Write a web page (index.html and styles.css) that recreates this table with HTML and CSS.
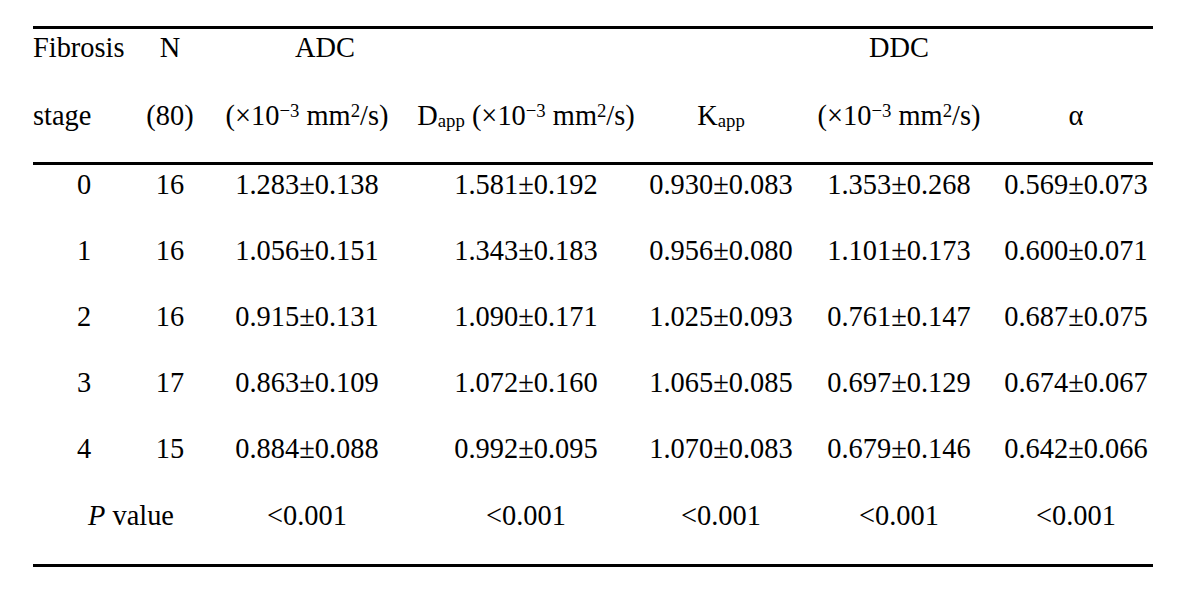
FILE: index.html
```html
<!DOCTYPE html>
<html>
<head>
<meta charset="utf-8">
<link rel="stylesheet" href="styles.css">
</head>
<body>
<table class="tbl">
  <colgroup>
    <col class="c1"><col class="c2"><col class="c3"><col class="c4"><col class="c5"><col class="c6"><col class="c7">
  </colgroup>
  <thead>
    <tr class="h1">
      <th class="left">Fibrosis</th>
      <th>N</th>
      <th class="adc">ADC</th>
      <th></th>
      <th></th>
      <th>DDC</th>
      <th></th>
    </tr>
    <tr class="h2">
      <th class="left">stage</th>
      <th>(80)</th>
      <th>(×10<sup>−3</sup> mm<sup>2</sup>/s)</th>
      <th>D<sub>app</sub> (×10<sup>−3</sup> mm<sup>2</sup>/s)</th>
      <th>K<sub>app</sub></th>
      <th>(×10<sup>−3</sup> mm<sup>2</sup>/s)</th>
      <th>α</th>
    </tr>
  </thead>
  <tbody>
    <tr><td>0</td><td>16</td><td>1.283±0.138</td><td>1.581±0.192</td><td>0.930±0.083</td><td>1.353±0.268</td><td>0.569±0.073</td></tr>
    <tr><td>1</td><td>16</td><td>1.056±0.151</td><td>1.343±0.183</td><td>0.956±0.080</td><td>1.101±0.173</td><td>0.600±0.071</td></tr>
    <tr><td>2</td><td>16</td><td>0.915±0.131</td><td>1.090±0.171</td><td>1.025±0.093</td><td>0.761±0.147</td><td>0.687±0.075</td></tr>
    <tr><td>3</td><td>17</td><td>0.863±0.109</td><td>1.072±0.160</td><td>1.065±0.085</td><td>0.697±0.129</td><td>0.674±0.067</td></tr>
    <tr><td>4</td><td>15</td><td>0.884±0.088</td><td>0.992±0.095</td><td>1.070±0.083</td><td>0.679±0.146</td><td>0.642±0.066</td></tr>
    <tr class="last"><td colspan="2" class="pval"><i>P</i> value</td><td>&lt;0.001</td><td>&lt;0.001</td><td>&lt;0.001</td><td>&lt;0.001</td><td>&lt;0.001</td></tr>
  </tbody>
</table>
</body>
</html>
```

FILE: styles.css
```css
html, body {
  margin: 0;
  padding: 0;
  background: #ffffff;
}

body {
  font-family: "Liberation Serif", "Times New Roman", serif;
  font-size: 28.4px;
  color: #000000;
}

.tbl {
  margin: 26px 0 0 33px;
  width: 1120px;
  table-layout: fixed;
  border-collapse: separate;
  border-spacing: 0;
  border-top: 3px solid #000;
  border-bottom: 3px solid #000;
}

.c1 { width: 102px; }
.c2 { width: 70px; }
.c3 { width: 204px; }
.c4 { width: 234px; }
.c5 { width: 156px; }
.c6 { width: 200px; }
.c7 { width: 154px; }

.tbl th,
.tbl td {
  font-weight: normal;
  text-align: center;
  vertical-align: top;
  line-height: 32px;
  white-space: nowrap;
  padding: 0;
}

.tbl .left {
  text-align: left;
}

.h1 th {
  padding: 3px 0 35px;
}

.h2 th {
  padding: 1px 0 30px;
  border-bottom: 3px solid #000;
}

.tbl .h1 .adc {
  padding-left: 36px;
}

.tbl tbody td {
  padding: 3.6px 0 30.6px;
}

.tbl tbody .last td {
  padding: 3.6px 0 32.4px;
}

.tbl tbody .last .pval {
  padding-left: 24px;
}

sup {
  font-size: 0.66em;
  line-height: 0;
  vertical-align: 0.45em;
}

sub {
  font-size: 0.66em;
  line-height: 0;
  vertical-align: -0.12em;
}
```
